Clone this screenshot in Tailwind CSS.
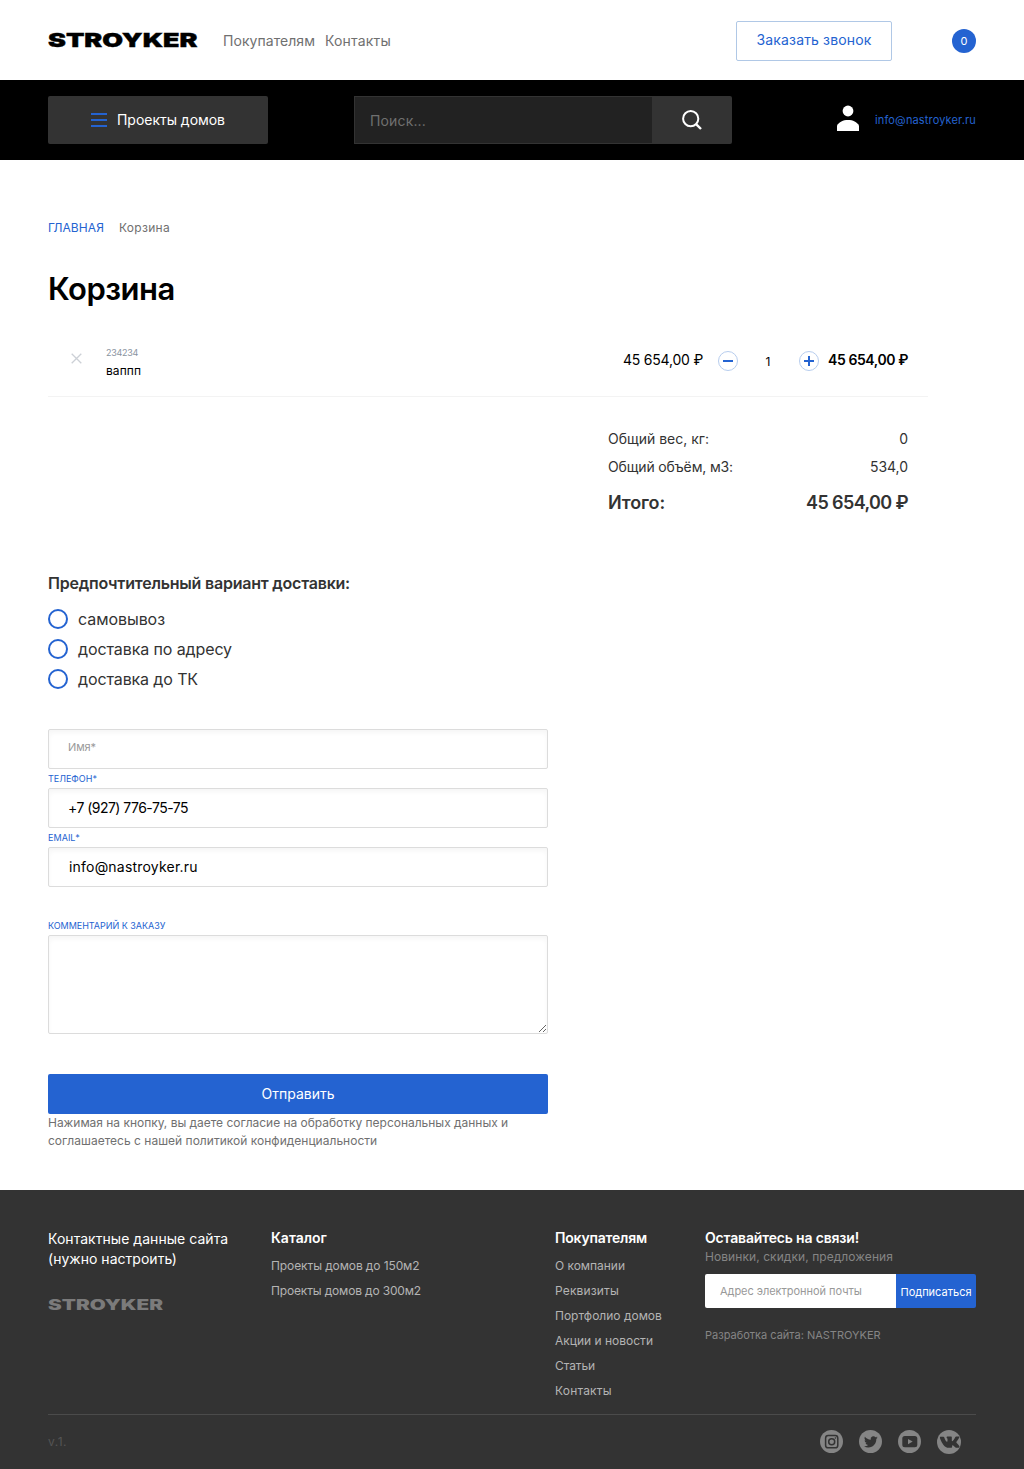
<!DOCTYPE html>
<html lang="ru">
<head>
<meta charset="utf-8">
<title>Корзина</title>
<script src="https://cdn.jsdelivr.net/npm/@tailwindcss/browser@4"></script>
</head>
<body class="w-[1024px] bg-white font-['Inter','Noto_Sans',sans-serif] text-sm text-[#333]">
<header>
  <div class="flex h-20 items-center px-12">
    <svg class="block h-[15px] w-[150px] overflow-visible" viewBox="0 0 150 15" role="img" aria-label="STROYKER"><text x="0" y="14" textLength="149.500" lengthAdjust="spacingAndGlyphs" class="fill-black stroke-black stroke-[0.4] text-[19px] font-black">STROYKER</text></svg>
    <nav class="ml-[25px] flex gap-[10px] pt-0.5 text-[14px] leading-5 text-[#707070]">
      <a class="tracking-[0.055px]">Покупателям</a><a class="tracking-[0.182px]">Контакты</a>
    </nav>
    <button class="mt-0.5 ml-auto flex h-10 w-[156px] items-center justify-center rounded-[2px] border border-[#b0c8e6] pb-0.5 text-[14px] text-[#2463d1]"><span class="tracking-[0.152px]">Заказать звонок</span></button>
    <span class="mt-0.5 ml-[60px] flex size-6 items-center justify-center rounded-full bg-[#2463d1] pt-px text-[11px] text-white">0</span>
  </div>
  <div class="flex h-20 items-center bg-black px-12">
    <button class="flex h-12 w-[220px] items-center gap-[10px] rounded-[2px] bg-[#333] pl-[43px] text-[14px] text-white">
      <svg class="h-[14px] w-4" viewBox="0 0 16 14"><path d="M0 1h16M0 7h16M0 13h16" stroke="#2463d1" stroke-width="2"/></svg>
      <span class="pb-px tracking-[-0.03px]">Проекты домов</span>
    </button>
    <div class="ml-[86px] flex h-12 w-[378px] rounded-[2px]">
      <div class="flex flex-1 items-center border border-r-0 border-[#333] bg-[#222] pt-0.5 pl-[15px] text-[14px] text-[#707070]"><span class="tracking-[0.154px]">Поиск...</span></div>
      <button class="flex w-20 items-center justify-center rounded-r-[2px] bg-[#333]">
        <svg class="size-5" viewBox="0 0 20 20" fill="none" stroke="#fff" stroke-width="2"><circle cx="8.7" cy="8.7" r="7.6"/><path d="M13.8 13.8 19 19" stroke-width="2.4"/></svg>
      </button>
    </div>
    <div class="ml-auto flex items-center gap-4">
      <svg class="mb-1 h-[26px] w-[22px]" viewBox="0 0 22 26" fill="#fff"><circle cx="11" cy="6" r="5.4"/><path d="M0 26V20.500C2 17 6 15 11 15S20 17 22 20.500V26Z"/></svg>
      <a class="pt-0.5 text-[11px] tracking-[0.152px] text-[#2463d1]">info@nastroyker.ru</a>
    </div>
  </div>
</header>

<main class="h-[1030px] px-12 pt-[59px]">
  <nav class="flex gap-[15px] text-[12px] leading-[18px]"><a class="tracking-[0.094px] text-[#2463d1]">ГЛАВНАЯ</a><span class="tracking-[0.286px] text-[#707070]">Корзина</span></nav>
  <h1 class="mt-8 text-[31px] leading-10 font-semibold tracking-[-0.5px] text-black">Корзина</h1>

  <section class="mt-[31px] w-[880px]">
    <div class="flex h-[57px] items-start border-b border-[#f3f3f3] pr-5 text-black">
      <svg class="mt-[13px] ml-[23px] size-[11px]" viewBox="0 0 11 11"><path d="m.7.7 9.600 9.600M10.300.7.7 10.300" stroke="#ccd0d6" stroke-width="1.300"/></svg>
      <div class="ml-6 flex flex-col items-start pt-[5px]"><span class="text-[9px] leading-4 tracking-[-0.289px] text-[#8a949f]">234234</span><span class="mt-0.5 text-[12px] leading-4 tracking-[0.063px]">ваппп</span></div>
      <span class="mt-[10px] ml-auto text-[14px] leading-5 tracking-[-0.214px]">45 654,00 ₽</span>
      <div class="mt-[11px] ml-[15px] flex w-[101px] items-center justify-between">
        <button class="flex size-5 items-center justify-center rounded-full border border-[#b7cdee]"><svg class="size-[10px]" viewBox="0 0 10 10"><path d="M0 5h10" stroke="#2463d1" stroke-width="2"/></svg></button>
        <span class="pt-0.5 pr-px text-[12px]">1</span>
        <button class="flex size-5 items-center justify-center rounded-full border border-[#b7cdee]"><svg class="size-[10px]" viewBox="0 0 10 10"><path d="M0 5h10M5 0v10" stroke="#2463d1" stroke-width="2"/></svg></button>
      </div>
      <span class="mt-[10px] ml-[9px] text-[14px] leading-5 font-semibold tracking-[-0.413px]">45 654,00 ₽</span>
    </div>
    <div class="mt-7 mr-5 ml-auto w-[300px] text-[14px]">
      <div class="flex h-7 items-center justify-between"><span>Общий вес, кг:</span><span>0</span></div>
      <div class="flex h-7 items-center justify-between"><span class="tracking-[-0.143px]">Общий объём, м3:</span><span class="tracking-[-0.05px]">534,0</span></div>
      <div class="mt-2 flex h-7 items-center justify-between text-[18px] font-semibold"><span class="tracking-[-0.128px]">Итого:</span><span class="tracking-[-0.608px]">45 654,00 ₽</span></div>
    </div>
  </section>

  <form class="mt-[54px] w-[500px]">
    <h2 class="text-[16px] leading-6 font-semibold tracking-[-0.221px]">Предпочтительный вариант доставки:</h2>
    <div class="mt-3.5 flex flex-col gap-[10px] text-[16px] leading-5">
      <label class="flex gap-[10px]"><i class="size-5 rounded-full border-2 border-[#2463d1]"></i><span class="tracking-[-0.063px]">самовывоз</span></label>
      <label class="flex gap-[10px]"><i class="size-5 rounded-full border-2 border-[#2463d1]"></i><span class="tracking-[-0.105px]">доставка по адресу</span></label>
      <label class="flex gap-[10px]"><i class="size-5 rounded-full border-2 border-[#2463d1]"></i><span class="tracking-[-0.117px]">доставка до ТК</span></label>
    </div>
    <div class="mt-10 flex h-10 items-center rounded-[2px] border border-[#dcdcdc] pb-[3px] pl-[19px] text-[11px] tracking-[-0.094px] text-[#999] shadow-[inset_0_3px_5px_rgba(0,0,0,0.04)]">Имя*</div>
    <div class="flex h-[19px] items-center pt-px text-[9px] text-[#2463d1]">ТЕЛЕФОН*</div>
    <div class="flex h-10 items-center rounded-[2px] border border-[#dcdcdc] pl-[19px] text-[14px] tracking-[-0.53px] text-black shadow-[inset_0_3px_5px_rgba(0,0,0,0.04)]">+7 (927) 776-75-75</div>
    <div class="flex h-[19px] items-center pt-px text-[9px] tracking-[0.05px] text-[#2463d1]">EMAIL*</div>
    <div class="flex h-10 items-center rounded-[2px] border border-[#dcdcdc] pl-5 text-[14px] tracking-[0.2px] text-black shadow-[inset_0_3px_5px_rgba(0,0,0,0.04)]">info@nastroyker.ru</div>
    <div class="mt-[29px] flex h-[19px] items-center pt-px text-[9px] tracking-[-0.03px] text-[#2463d1]">КОММЕНТАРИЙ К ЗАКАЗУ</div>
    <textarea class="block h-[99px] w-full resize-y rounded-[2px] border border-[#dcdcdc] shadow-[inset_0_3px_5px_rgba(0,0,0,0.04)]"></textarea>
    <button class="mt-10 flex h-10 w-full items-center justify-center rounded-[2px] bg-[#2463d1] text-[14px] text-white">Отправить</button>
    <p class="text-[12px] leading-[18px] whitespace-nowrap text-[#707070]"><span class="tracking-[-0.024px]">Нажимая на кнопку, вы даете согласие на обработку персональных данных и</span><br><span class="tracking-[0.016px]">соглашаетесь с нашей политикой конфиденциальности</span></p>
  </form>
</main>

<footer class="h-[279px] bg-[#333] px-12 pt-[39px]">
  <div class="grid h-[186px] grid-cols-[223px_284px_150px_271px] border-b border-[#4b4b4b]">
    <div class="flex flex-col items-start text-[14px] leading-5 text-white">
      <span class="tracking-[0.04px]">Контактные данные сайта</span><span class="tracking-[0.023px]">(нужно настроить)</span>
      <svg class="mt-[30px] block h-3 w-[115px] overflow-visible" viewBox="0 0 115 12" role="img" aria-label="STROYKER"><text x="0" y="11.300" textLength="115" lengthAdjust="spacingAndGlyphs" class="fill-[#7b7b7b] text-[14px] font-black">STROYKER</text></svg>
    </div>
    <div class="flex flex-col items-start text-[12px] leading-[25px] text-[#b4b4b4]">
      <h3 class="mb-[6px] text-[14px] leading-[18px] font-semibold text-white">Каталог</h3>
      <a class="tracking-[-0.1px]">Проекты домов до 150м2</a><a class="tracking-[-0.159px]">Проекты домов до 300м2</a>
    </div>
    <div class="flex flex-col items-start text-[12px] leading-[25px] text-[#b4b4b4]">
      <h3 class="mb-[6px] text-[14px] leading-[18px] font-semibold tracking-[-0.193px] text-white">Покупателям</h3>
      <a class="tracking-[-0.031px]">О компании</a><a class="tracking-[0.153px]">Реквизиты</a><a>Портфолио домов</a><a>Акции и новости</a><a class="tracking-[-0.112px]">Статьи</a><a class="tracking-[0.18px]">Контакты</a>
    </div>
    <div class="flex flex-col items-start text-[12px]">
      <h3 class="text-[14px] leading-[18px] font-semibold tracking-[-0.171px] text-white">Оставайтесь на связи!</h3>
      <span class="leading-5 tracking-[0.071px] text-[#858585]">Новинки, скидки, предложения</span>
      <div class="mt-[7px] flex h-[34px] w-[271px] text-[11px]">
        <div class="flex flex-1 items-center rounded-l-[2px] bg-white pt-px pl-[15px] tracking-[-0.04px] text-[#999]">Адрес электронной почты</div>
        <button class="flex w-20 items-center justify-center rounded-r-[2px] bg-[#2463d1] pt-[3px] text-white">Подписаться</button>
      </div>
      <span class="mt-[18px] text-[11px] leading-[18px] text-[#858585]">Разработка сайта: NASTROYKER</span>
    </div>
  </div>
  <div class="flex h-[54px] items-center pr-[15px]">
    <span class="mr-auto text-[12px] tracking-[0.5px] text-[#555]">v.1.</span>
    <div class="flex items-start gap-4">
      <svg class="size-[23px]" viewBox="0 0 23 23"><circle cx="11.500" cy="11.500" r="11.500" fill="#858585"/><rect x="5.600" y="5.600" width="12.200" height="12.200" rx="2.600" fill="none" stroke="#333" stroke-width="1.500"/><circle cx="11.700" cy="11.700" r="3" fill="none" stroke="#333" stroke-width="1.500"/><circle cx="15.400" cy="8" r=".8" fill="#333"/></svg>
      <svg class="size-[23px]" viewBox="0 0 23 23"><circle cx="11.500" cy="11.500" r="11.500" fill="#858585"/><path transform="translate(5 5) scale(.57)" fill="#333" d="M23.950 4.570a10 10 0 0 1-2.820.77 4.960 4.960 0 0 0 2.160-2.720c-.95.55-2 .95-3.120 1.180a4.920 4.920 0 0 0-8.380 4.480C7.690 8.090 4.070 6.130 1.640 3.160a4.820 4.820 0 0 0-.67 2.480c0 1.710.87 3.210 2.190 4.100a4.900 4.900 0 0 1-2.230-.62v.06a4.920 4.920 0 0 0 3.950 4.830 5 5 0 0 1-2.210.08 4.940 4.940 0 0 0 4.600 3.420A9.870 9.870 0 0 1 0 19.540a14 14 0 0 0 7.550 2.210c9.050 0 14-7.500 14-13.980 0-.21 0-.42-.02-.63a9.940 9.940 0 0 0 2.460-2.550z"/></svg>
      <svg class="size-[23px]" viewBox="0 0 23 23"><circle cx="11.500" cy="11.500" r="11.500" fill="#858585"/><rect x="4.300" y="6" width="15" height="11.300" rx="2.500" fill="#333"/><path d="m10 9 4.700 2.600-4.700 2.700z" fill="#858585"/></svg>
      <svg class="size-6" viewBox="0 0 24 24"><circle cx="12" cy="12" r="12" fill="#858585"/><path fill="#333" d="M12.900 17.800h-1.200C7.500 17.800 5 13.500 3 8.200c-.2-.8-.1-1.500.6-1.500h2.700c.6 0 .8.300 1 .8.600 1.800 1.600 4.200 2.600 4.200.6 0 .6-.7.600-1.500V9.100c0-.9-.9-1-.9-1.600s.4-1 1-1h3.300c.7 0 .9.400.9 1v3.100c0 .5.200.7.500.7.700-.2 2.200-2.600 2.900-4.100.2-.4.500-.6 1-.6h2.500c.7 0 .8.400.6 1-.6 1.500-3 4.300-3 4.700 0 .7 2.700 2.700 3.200 4.300.2.700-.1 1.100-.8 1.100h-2.700c-1 0-2.300-2.500-3.300-2.500-.5 0-.6.400-.6.900v.9c0 .500-.2.800-.8.800Z"/></svg>
    </div>
  </div>
</footer>
</body>
</html>
